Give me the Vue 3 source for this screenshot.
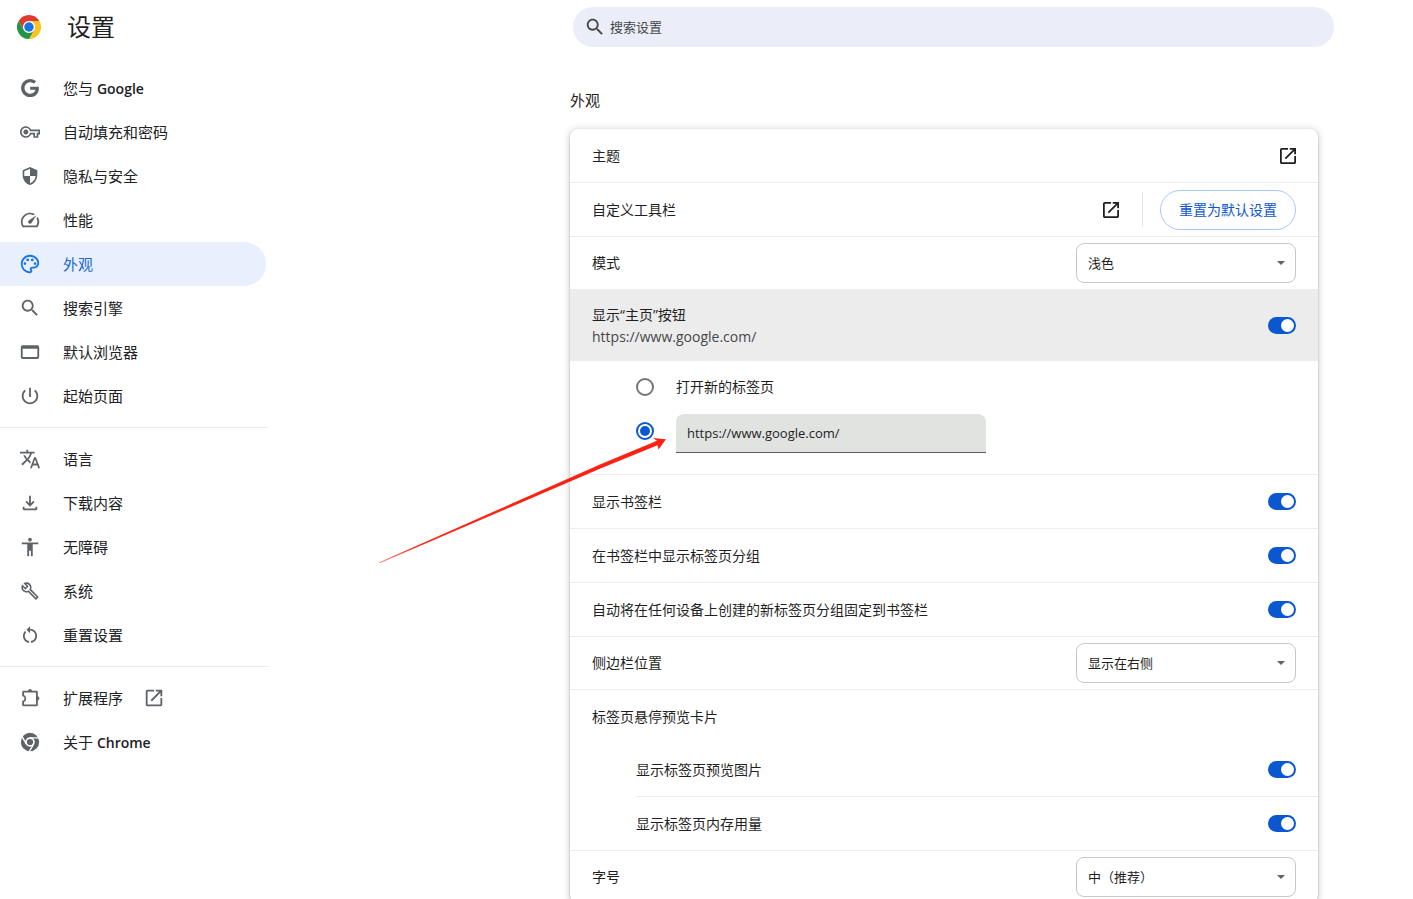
<script setup>
import { ref } from 'vue'

const icons = {
  google: { box: '-2.5 -2.5 29 29', d: 'M12.24 10.285V14.4h6.806c-.275 1.765-2.056 5.174-6.806 5.174-4.095 0-7.439-3.389-7.439-7.574s3.345-7.574 7.439-7.574c2.33 0 3.891.989 4.785 1.849l3.254-3.138C18.189 1.186 15.479 0 12.24 0c-6.635 0-12 5.365-12 12s5.365 12 12 12c6.926 0 11.52-4.869 11.52-11.726 0-.788-.085-1.39-.189-1.989H12.24z' },
  key: { box: '-1.2 -1.2 26.4 26.4', d: 'M22 19h-6v-4h-2.68c-1.14 2.42-3.6 4-6.32 4-3.86 0-7-3.14-7-7s3.14-7 7-7c2.72 0 5.17 1.58 6.32 4H24v6h-2v4zm-4-2h2v-4h2v-2H11.94l-.23-.67C11.01 8.34 9.11 7 7 7c-2.76 0-5 2.24-5 5s2.24 5 5 5c2.11 0 4.01-1.34 4.71-3.33l.23-.67H18v4zM7 15c-1.65 0-3-1.35-3-3s1.35-3 3-3 3 1.35 3 3-1.35 3-3 3z' },
  shield: { box: '-1.5 -1.5 27 27', d: 'M12 1L3 5v6c0 5.55 3.84 10.74 9 12 5.16-1.26 9-6.45 9-12V5l-9-4zm0 10.99h7c-.53 4.12-3.28 7.79-7 8.94V12H5V6.3l7-3.11v8.8z' },
  speed: { box: '0 0 24 24', d: 'M20.38 8.57l-1.23 1.85a8 8 0 0 1-.22 7.58H5.07A8 8 0 0 1 15.58 6.85l1.85-1.23A10 10 0 0 0 3.35 19a2 2 0 0 0 1.72 1h13.85a2 2 0 0 0 1.74-1 10 10 0 0 0-.27-10.44zm-9.79 6.84a2 2 0 0 0 2.83 0l5.66-8.49-8.49 5.66a2 2 0 0 0 0 2.83z' },
  palette: { box: '0 0 24 24', d: 'M12 22C6.49 22 2 17.51 2 12S6.49 2 12 2s10 4.04 10 9c0 3.31-2.69 6-6 6h-1.77c-.28 0-.5.22-.5.5 0 .12.05.23.13.33.41.47.64 1.06.64 1.67 0 1.38-1.12 2.5-2.5 2.5zm0-18c-4.41 0-8 3.59-8 8s3.59 8 8 8c.28 0 .5-.22.5-.5 0-.16-.08-.28-.14-.35-.41-.46-.63-1.05-.63-1.65 0-1.38 1.12-2.5 2.5-2.5H16c2.21 0 4-1.79 4-4 0-3.86-3.59-7-8-7zM5 11.500a1.500 1.500 0 1 0 3 0a1.500 1.500 0 1 0-3 0zM8 7.500a1.500 1.500 0 1 0 3 0a1.500 1.500 0 1 0-3 0zM13 7.500a1.500 1.500 0 1 0 3 0a1.500 1.500 0 1 0-3 0zM16 11.500a1.500 1.500 0 1 0 3 0a1.500 1.500 0 1 0-3 0z' },
  search: { box: '0 0 24 24', d: 'M15.5 14h-.79l-.28-.27C15.41 12.59 16 11.11 16 9.5 16 5.91 13.09 3 9.5 3S3 5.91 3 9.5 5.91 16 9.5 16c1.61 0 3.09-.59 4.23-1.57l.27.28v.79l5 4.99L20.49 19l-4.99-5zm-6 0C7.01 14 5 11.99 5 9.5S7.01 5 9.5 5 14 7.01 14 9.5 11.99 14 9.5 14z' },
  browser: { box: '0 0 24 24', d: 'M4 4.500h16a2 2 0 0 1 2 2v11a2 2 0 0 1-2 2H4a2 2 0 0 1-2-2v-11a2 2 0 0 1 2-2zM4 8.500v9h16v-9z' },
  power: { box: '0 0 24 24', d: 'M13 3h-2v10h2V3zm4.83 2.17l-1.42 1.42C17.99 7.86 19 9.81 19 12c0 3.87-3.13 7-7 7s-7-3.13-7-7c0-2.19 1.01-4.14 2.58-5.42L6.17 5.17C4.23 6.82 3 9.26 3 12c0 4.97 4.03 9 9 9s9-4.03 9-9c0-2.74-1.23-5.18-3.17-6.83z' },
  translate: { box: '0 0 24 24', d: 'M12.87 15.07l-2.54-2.51.03-.03c1.74-1.94 2.98-4.17 3.71-6.53H17V4h-7V2H8v2H1v1.99h11.17C11.5 7.92 10.44 9.75 9 11.35 8.07 10.32 7.3 9.19 6.69 8h-2c.73 1.63 1.73 3.17 2.98 4.56l-5.09 5.02L4 19l5-5 3.11 3.11.76-2.04zM18.5 10h-2L12 22h2l1.12-3h4.75L21 22h2l-4.5-12zm-2.62 7l1.62-4.33L19.12 17h-3.24z' },
  download: { box: '0 0 24 24', d: 'M12 16l-5-5 1.4-1.45 2.6 2.6V4h2v8.15l2.6-2.6L17 11l-5 5zm-6 4q-.825 0-1.412-.587T4 18v-2h2v2h12v-2h2v2q0 .825-.587 1.413T18 20H6z' },
  person: { box: '0 0 24 24', d: 'M12 2c1.1 0 2 .9 2 2s-.9 2-2 2-2-.9-2-2 .9-2 2-2zm9 7h-6v13h-2v-6h-2v6H9V9H3V7h18v2z' },
  wrench: { box: '-2 -2 28 28', d: 'M22.61 18.99l-9.08-9.08c.93-2.34.45-5.1-1.44-7C9.79.61 6.21.4 3.66 2.26L7.5 6.11 6.08 7.52 2.25 3.69C.39 6.23.6 9.82 2.9 12.11c1.86 1.86 4.57 2.35 6.89 1.48l9.11 9.11c.39.39 1.02.39 1.41 0l2.3-2.3c.4-.38.4-1.01 0-1.41zm-3 1.6l-9.46-9.46c-.61.45-1.29.72-2 .82-1.36.2-2.79-.21-3.83-1.25C3.37 9.76 2.93 8.5 3 7.26l3.09 3.09 4.24-4.24-3.09-3.09c1.24-.07 2.49.37 3.44 1.31 1.08 1.08 1.49 2.57 1.24 3.96-.12.71-.42 1.37-.88 1.96l9.45 9.45-.88.89z' },
  reset: { box: '-.5 -.5 25 25', d: 'M12 5V2L8 6l4 4V7c3.31 0 6 2.69 6 6 0 2.97-2.17 5.43-5 5.91v2.02c3.95-.49 7-3.85 7-7.93 0-4.42-3.58-8-8-8zM6 13c0-1.65.67-3.15 1.76-4.24L6.34 7.34C4.9 8.79 4 10.79 4 13c0 4.08 3.05 7.44 7 7.93v-2.02c-2.83-.48-5-2.94-5-5.91z' },
  puzzle: { box: '0 0 24 24', d: 'M5 4h4.700a2.400 2.400 0 0 1 4.600 0H19a1.500 1.500 0 0 1 1.500 1.500v4.700a2.400 2.400 0 0 1 0 4.600v4.700A1.500 1.500 0 0 1 19 21H5a1.500 1.500 0 0 1-1.500-1.500V15a2.500 2.500 0 0 0 0-5V5.500A1.500 1.500 0 0 1 5 4zM5.500 6v2.600a4.400 4.400 0 0 1 0 7.800V19h13V6z' },
  chrome: {
    box: '0 0 24 24',
    d: 'M2 12a10 10 0 1 0 20 0a10 10 0 1 0-20 0zM6.800 12a5.200 5.200 0 1 1 10.400 0a5.200 5.200 0 1 1-10.400 0zM8.600 12a3.400 3.400 0 1 0 6.800 0a3.400 3.400 0 1 0-6.800 0z',
    gaps: 'M12 7.500h10M8.100 14.250L3.100 5.600M15.900 14.250L10.900 22.900'
  }
}

const openPath = 'M5 21q-.825 0-1.413-.587T3 19V5q0-.825.587-1.413T5 3h7v2H5v14h14v-7h2v7q0 .825-.587 1.413T19 21H5zm4.7-5.3l-1.4-1.4L17.6 5H14V3h7v7h-2V6.4l-9.3 9.3z'

const groups = [
  [
    { icon: 'google', text: '您与 ', brand: 'Google' },
    { icon: 'key', text: '自动填充和密码' },
    { icon: 'shield', text: '隐私与安全' },
    { icon: 'speed', text: '性能' },
    { icon: 'palette', text: '外观', active: true },
    { icon: 'search', text: '搜索引擎' },
    { icon: 'browser', text: '默认浏览器' },
    { icon: 'power', text: '起始页面' }
  ],
  [
    { icon: 'translate', text: '语言' },
    { icon: 'download', text: '下载内容' },
    { icon: 'person', text: '无障碍' },
    { icon: 'wrench', text: '系统' },
    { icon: 'reset', text: '重置设置' }
  ],
  [
    { icon: 'puzzle', text: '扩展程序', external: true },
    { icon: 'chrome', text: '关于 ', brand: 'Chrome' }
  ]
]

const homeButton = ref(true)
const homeTarget = ref('url')
const homeUrl = ref('https://www.google.com/')
const bookmarkToggles = ref([
  { id: 'bookmarks', text: '显示书签栏', on: true },
  { id: 'groups', text: '在书签栏中显示标签页分组', on: true },
  { id: 'pin', text: '自动将在任何设备上创建的新标签页分组固定到书签栏', on: true }
])
const hoverToggles = ref([
  { id: 'preview', text: '显示标签页预览图片', on: true },
  { id: 'memory', text: '显示标签页内存用量', on: true }
])
</script>

<template>
  <div class="page">
    <header class="toolbar">
      <div class="brand">
        <svg class="logo" viewBox="0 0 48 48" aria-hidden="true">
          <circle cx="24" cy="24" r="12" fill="#fff" />
          <path fill="#de3a2e" d="M24 12H44.781a23.994 23.994 0 0 0-41.564.003L13.608 30l.009-.002A11.985 11.985 0 0 1 24 12Z" />
          <path fill="#fcc31e" d="M34.391 30.003 24.001 48A23.994 23.994 0 0 0 44.780 12.003H23.999l-.003.009A11.985 11.985 0 0 1 34.391 30.003Z" />
          <path fill="#219447" d="M13.609 30.003 3.218 12.006A23.994 23.994 0 0 0 24.003 48L34.393 30.003l-.007-.007a11.985 11.985 0 0 1-20.778.007Z" />
          <circle cx="24" cy="24" r="9.500" fill="#1a73e8" />
        </svg>
        <h1>设置</h1>
      </div>
      <label class="search">
        <svg class="icon" viewBox="0 0 24 24" aria-hidden="true"><path :d="icons.search.d" /></svg>
        <input type="text" placeholder="搜索设置" aria-label="搜索设置" />
      </label>
    </header>

    <div class="body">
      <nav class="sidebar">
        <div v-for="(group, g) in groups" :key="g" class="group">
          <a v-for="item in group" :key="item.icon" href="#" class="item" :class="{ active: item.active }">
            <svg class="icon" :viewBox="icons[item.icon].box" aria-hidden="true">
              <path fill-rule="evenodd" :d="icons[item.icon].d" />
              <path v-if="icons[item.icon].gaps" fill="none" stroke="#fff" stroke-width="1.500" :d="icons[item.icon].gaps" />
            </svg>
            <span>{{ item.text }}<b v-if="item.brand">{{ item.brand }}</b></span>
            <svg v-if="item.external" class="icon" viewBox="0 0 24 24" aria-hidden="true"><path :d="openPath" /></svg>
          </a>
        </div>
      </nav>

      <main class="content">
        <h2>外观</h2>
        <section class="card">
          <div class="row">
            <span>主题</span>
            <button type="button" class="open" aria-label="主题">
              <svg viewBox="3 3 18 18" aria-hidden="true"><path :d="openPath" /></svg>
            </button>
          </div>
          <div class="row">
            <span>自定义工具栏</span>
            <div class="actions">
              <button type="button" class="open" aria-label="自定义工具栏">
                <svg viewBox="3 3 18 18" aria-hidden="true"><path :d="openPath" /></svg>
              </button>
              <i class="rule"></i>
              <button type="button" class="pill">重置为默认设置</button>
            </div>
          </div>
          <div class="row choice">
            <label for="mode">模式</label>
            <div class="select">
              <select id="mode"><option>浅色</option></select>
              <svg viewBox="0 0 8 4" aria-hidden="true"><path d="M0 0h8L4 4z" /></svg>
            </div>
          </div>
          <div class="row home">
            <label for="home">显示“主页”按钮<small>https://www.google.com/</small></label>
            <input id="home" v-model="homeButton" type="checkbox" class="toggle" />
          </div>
          <div class="options">
            <div class="option">
              <input id="newtab" v-model="homeTarget" type="radio" name="home" value="newtab" />
              <label for="newtab">打开新的标签页</label>
            </div>
            <div class="option">
              <input v-model="homeTarget" type="radio" name="home" value="url" aria-label="自定义网址" />
              <input v-model="homeUrl" type="text" class="url" aria-label="网址" />
            </div>
            <svg class="pointer" viewBox="0 0 300 140" aria-hidden="true">
              <defs>
                <linearGradient id="fade" gradientUnits="userSpaceOnUse" x1="10" y1="132" x2="296" y2="9">
                  <stop offset="0" stop-color="#ff2214" stop-opacity=".6" />
                  <stop offset=".12" stop-color="#ff2214" />
                </linearGradient>
              </defs>
              <path fill="url(#fade)" d="M9 132.500 230 34.500 287 10.800 283 8 296 9.300 288.500 19.500 287.500 15.200 231 38.300 9.500 133.300z" />
            </svg>
          </div>
          <div v-for="item in bookmarkToggles" :key="item.id" class="row">
            <label :for="item.id">{{ item.text }}</label>
            <input :id="item.id" v-model="item.on" type="checkbox" class="toggle" />
          </div>
          <div class="row choice">
            <label for="side">侧边栏位置</label>
            <div class="select">
              <select id="side"><option>显示在右侧</option></select>
              <svg viewBox="0 0 8 4" aria-hidden="true"><path d="M0 0h8L4 4z" /></svg>
            </div>
          </div>
          <div class="row"><span>标签页悬停预览卡片</span></div>
          <div class="nested">
            <div v-for="item in hoverToggles" :key="item.id" class="row">
              <label :for="item.id">{{ item.text }}</label>
              <input :id="item.id" v-model="item.on" type="checkbox" class="toggle" />
            </div>
          </div>
          <div class="row choice">
            <label for="size">字号</label>
            <div class="select">
              <select id="size"><option>中（推荐）</option></select>
              <svg viewBox="0 0 8 4" aria-hidden="true"><path d="M0 0h8L4 4z" /></svg>
            </div>
          </div>
        </section>
      </main>
    </div>
  </div>
</template>

<style>
body {
  margin: 0;
  background: #fff;
}
</style>

<style scoped>
.page {
  display: flex;
  flex-direction: column;
  height: 100vh;
  overflow: hidden;
  color: #1f1f1f;
  font: 14px/22px "Open Sans", "Noto Sans CJK SC", sans-serif;
}
.page * {
  box-sizing: border-box;
}
input,
select,
button {
  margin: 0;
  padding: 0;
  border: 0;
  background: none;
  color: inherit;
  font: inherit;
}
h1,
h2 {
  margin: 0;
  font-weight: 400;
}
.toolbar {
  display: grid;
  grid-template-columns: 268px 305fr 761fr 79fr;
  align-items: center;
  flex: none;
  height: 54px;
}
.brand {
  display: flex;
  align-items: center;
  gap: 26px;
  padding-left: 17px;
}
.logo {
  width: 24px;
  height: 24px;
}
h1 {
  font-size: 24px;
  line-height: 32px;
}
.icon {
  flex: none;
  width: 22px;
  height: 22px;
  fill: currentColor;
}
.search {
  grid-column: 3;
  display: flex;
  align-items: center;
  gap: 4px;
  height: 40px;
  padding: 0 11px;
  border-radius: 20px;
  background: #ebeef8;
  color: #474747;
  font-size: 13px;
}
.search input {
  flex: 1;
  min-width: 0;
  outline: 0;
}
.search input::placeholder {
  color: #474747;
  opacity: 1;
}
.body {
  display: grid;
  grid-template-columns: 268px minmax(0, 1fr);
  flex: 1;
  min-height: 0;
}
.sidebar {
  padding-top: 12px;
  color: #202124;
  font-size: 15px;
}
.group + .group {
  margin-top: 9px;
  padding-top: 9px;
  border-top: 1px solid #e8eaed;
}
.item {
  display: flex;
  align-items: center;
  height: 44px;
  margin-right: 2px;
  padding-left: 19px;
  border-radius: 0 22px 22px 0;
  color: inherit;
  text-decoration: none;
}
.item span {
  margin: 0 20px 0 22px;
}
.item b {
  font-size: 14px;
  font-weight: 600;
}
.item .icon {
  color: #5f6368;
}
.item.active {
  background: #e8f0fe;
  color: #1967d2;
}
.item.active .icon {
  color: #1a73e8;
}
.content {
  display: grid;
  grid-template-columns: 302fr 748fr 95fr;
  grid-template-rows: auto auto;
  align-content: start;
  overflow-y: auto;
  scrollbar-width: none;
  padding: 34px 0 24px;
}
h2 {
  grid-column: 2;
  margin-bottom: 17px;
  font-size: 15px;
  line-height: 24px;
}
.card {
  grid-column: 2;
  border-radius: 8px;
  background: #fff;
  box-shadow: 0 1px 2px rgba(60, 64, 67, 0.4), 0 1px 6px 2px rgba(60, 64, 67, 0.16);
}
.row {
  display: flex;
  align-items: center;
  justify-content: space-between;
  min-height: 54px;
  padding: 0 22px;
  border-top: 1px solid #ededed;
}
.row:first-child {
  min-height: 53px;
  border-top: 0;
}
.choice {
  min-height: 53px;
}
.home {
  min-height: 72px;
  background: #ececec;
}
small {
  display: block;
  color: #474747;
  font-size: 14px;
}
.actions {
  display: flex;
  align-items: center;
}
.open {
  display: flex;
}
.open svg {
  width: 16px;
  height: 16px;
  fill: currentColor;
}
.rule {
  width: 1px;
  height: 35px;
  margin: 0 17px 0 23px;
  background: #e8e8e8;
}
.pill {
  height: 40px;
  padding: 0 18px;
  border: 1px solid #a8c7fa;
  border-radius: 20px;
  color: #0b57d0;
}
.select {
  position: relative;
  width: 220px;
}
select {
  width: 100%;
  height: 40px;
  padding: 0 32px 0 11px;
  border: 1px solid #c7c7c7;
  border-radius: 8px;
  appearance: none;
  font-size: 13px;
}
.select svg {
  position: absolute;
  top: 18px;
  right: 11px;
  width: 8px;
  height: 4px;
  fill: #5f6368;
  pointer-events: none;
}
.toggle {
  flex: none;
  display: flex;
  align-items: center;
  width: 28px;
  height: 17px;
  padding: 0 2px;
  border-radius: 9px;
  background: #747775;
  appearance: none;
}
.toggle::before {
  content: "";
  width: 13px;
  height: 13px;
  border-radius: 50%;
  background: #fff;
}
.toggle:checked {
  justify-content: flex-end;
  background: #0b57d0;
}
.options {
  position: relative;
  padding: 4px 66px 21px;
}
.option {
  display: flex;
  align-items: center;
  gap: 22px;
  height: 44px;
}
.option input[type="radio"] {
  display: grid;
  place-items: center;
  width: 18px;
  height: 18px;
  border: 2px solid #747775;
  border-radius: 50%;
  appearance: none;
}
.option input[type="radio"]:checked {
  border-color: #0b57d0;
}
.option input[type="radio"]:checked::before {
  content: "";
  width: 10px;
  height: 10px;
  border-radius: 50%;
  background: #0b57d0;
}
.url {
  align-self: flex-end;
  width: 310px;
  height: 39px;
  padding: 0 11px;
  border-bottom: 1px solid #5e5e5e;
  border-radius: 8px 8px 0 0;
  outline: 0;
  background: #e1e3e1;
  font-size: 13px;
}
.pointer {
  position: absolute;
  top: 69px;
  left: -200px;
  width: 300px;
  height: 140px;
  pointer-events: none;
}
.nested {
  padding-left: 66px;
}
.nested .row {
  padding-left: 0;
}
</style>
